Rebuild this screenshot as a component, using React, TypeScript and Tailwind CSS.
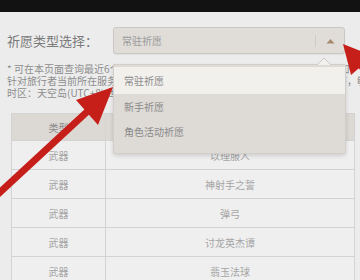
import React from "react"

const rows = [
    { type: "武器", name: "以理服人" },
    { type: "武器", name: "神射手之誓" },
    { type: "武器", name: "弹弓" },
    { type: "武器", name: "讨龙英杰谭" },
    { type: "武器", name: "翡玉法球" },
]

const options = ["常驻祈愿", "新手祈愿", "角色活动祈愿"]

const App = () => {
    return (
        <main className="relative w-[360px] h-[280px] overflow-hidden bg-[#ececec] font-['Noto_Sans_CJK_SC','Noto_Sans',sans-serif] flex flex-col">
            <div className="h-[12px] bg-[#121212] shrink-0" />

            {/* select row */}
            <div className="flex items-center pl-[7px] pt-[15px] gap-[18px]">
                <span className="text-[13px] text-[#7a7a7a] w-[88px] whitespace-nowrap">祈愿类型选择：</span>
                <div className="relative w-[232px] h-[27px] bg-[#e0ddd9] border border-[#cbc7c3] rounded-[3px] shadow-[0px_1px_1px_0px_#00000010] flex items-center">
                    <span className="flex-1 pl-[8px] text-[10px] text-[#9a9a9a]">常驻祈愿</span>
                    <span className="w-px h-[12px] bg-[#cfcbc7]" />
                    <span className="w-[28px] flex justify-center">
                        <svg width="9" height="6" viewBox="0 0 9 6">
                            <path d="M0.5 5.5 L4.5 1 L8.5 5.5 Z" fill="#a88a6c" />
                        </svg>
                    </span>

                    {/* dropdown */}
                    <div className="absolute left-[-1px] top-[36px] w-[233px] z-10">
                        <svg className="absolute right-[15px] top-[-7px]" width="14" height="8" viewBox="0 0 14 8">
                            <path d="M0 8 L7 1 L14 8" fill="#f2f0ed" stroke="#cdc9c5" strokeWidth="1" />
                        </svg>
                        <div className="bg-[#dedad6] border border-[#d2cec9] rounded-[2px] shadow-[0px_2px_4px_0px_#00000022] pt-[2px] pb-[9px] flex flex-col">
                            {options.map((o, i) => (
                                <div
                                    key={o}
                                    className={
                                        i === 0
                                            ? "h-[27px] flex items-center pl-[10px] text-[10px] text-[#8a8a8a] bg-[#f2f0ed]"
                                            : "h-[25px] flex items-center pl-[10px] text-[10px] text-[#8a8a8a]"
                                    }
                                >
                                    {o}
                                </div>
                            ))}
                        </div>
                    </div>
                </div>
            </div>

            {/* notes */}
            <div className="pl-[7px] pt-[9px] text-[10px] leading-[12px] text-[#8c8c8c] whitespace-nowrap flex flex-col">
                <span>* 可在本页面查询最近6个月的祈愿记录，祈愿数据统计以服务器时间为准告知</span>
                <span>针对旅行者当前所在服务器的时区显示祈愿记录时间并按照时间先后进行排序，敏感</span>
                <span>时区：天空岛(UTC+8);世界树(UTC+8);美服(UTC-5);欧服(UTC+1);(UTC+8);</span>
            </div>

            {/* table */}
            <div className="ml-[11px] mt-[14px] w-[344px] border-l border-t border-[#d3d3d3]">
                <div className="grid grid-cols-[94px_1fr] h-[27px] bg-[#dcd8d4]">
                    <div className="flex items-center justify-center border-r border-b border-[#d3d3d3] text-[10px] text-[#8a8a8a]">类型</div>
                    <div className="flex items-center justify-center border-r border-b border-[#d3d3d3] text-[10px] text-[#8a8a8a]">名称</div>
                </div>
                {rows.map((r, i) => (
                    <div key={i} className="grid grid-cols-[94px_1fr] h-[29px] bg-[#efefef]">
                        <div className="flex items-center justify-center border-r border-b border-[#d3d3d3] text-[10px] text-[#a5a5a5]">{r.type}</div>
                        <div className="flex items-center justify-center border-r border-b border-[#d3d3d3] text-[10px] text-[#a5a5a5]">{r.name}</div>
                    </div>
                ))}
            </div>

            {/* red annotation arrows */}
            <svg className="absolute left-0 top-0 z-20 pointer-events-none" width="360" height="280" viewBox="0 0 360 280">
                <line x1="-4" y1="196" x2="90" y2="109" stroke="#c61f1a" strokeWidth="7" />
                <path d="M113 87 L76 100 L98 125 Z" fill="#c61f1a" />
                <line x1="358" y1="62" x2="390" y2="100" stroke="#c61f1a" strokeWidth="7" />
                <path d="M343 44 L373 56 L351 75 Z" fill="#c61f1a" />
            </svg>
        </main>
    )
}

export default App
